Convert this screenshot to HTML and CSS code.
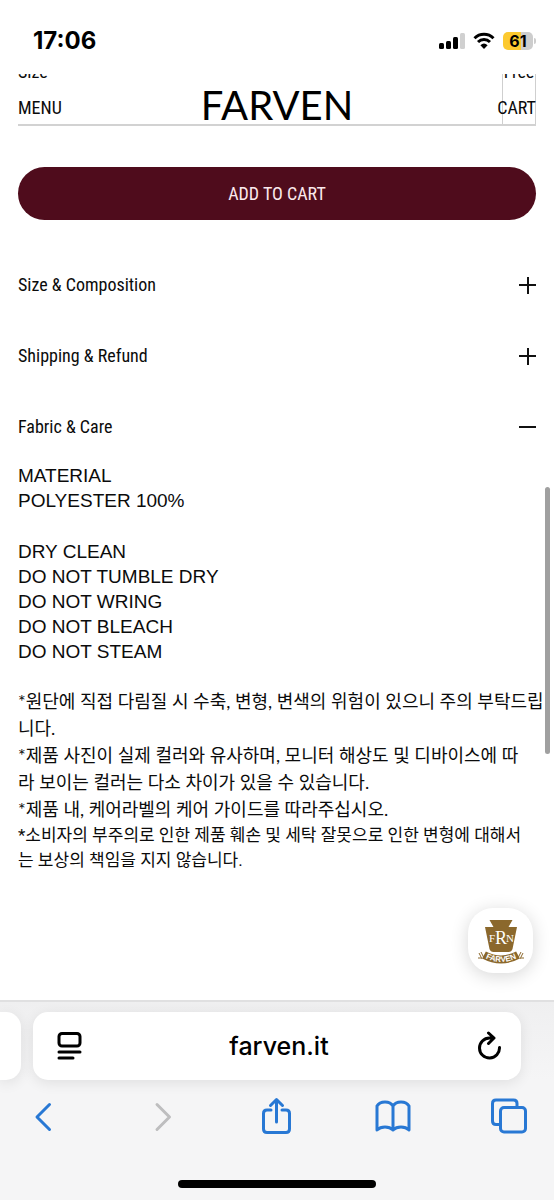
FILE: index.html
```
<!DOCTYPE html>
<html lang="ko">
<head>
<meta charset="utf-8">
<meta name="viewport" content="width=device-width, initial-scale=1">
<title>FARVEN</title>
<link rel="stylesheet" href="styles.css">
</head>
<body>
<div class="phone">
  <div class="status">
    <time class="clock">17:06</time>
    <div class="indicators">
      <svg class="signal" width="26" height="18" viewBox="0 0 26 18" aria-hidden="true">
        <rect x="0" y="11" width="5" height="6" rx="1.5"/>
        <rect x="7" y="9" width="5" height="8" rx="1.5"/>
        <rect x="14" y="5" width="5" height="12" rx="1.5"/>
        <rect class="dim" x="21" y="1" width="5" height="16" rx="1.5"/>
      </svg>
      <svg class="wifi" width="22" height="18" viewBox="0 0 22 18" aria-hidden="true">
        <path d="M1.500 6.200a13.600 13.600 0 0 1 19 0M5 10a8.700 8.700 0 0 1 12 0"/>
        <path class="dot" d="M7.400 13.200a5.400 5.400 0 0 1 7.200 0L11 17z"/>
      </svg>
      <div class="battery"><span class="level">61</span><i class="tip"></i></div>
    </div>
  </div>

  <main class="page">
    <header class="site-header">
      <button class="nav" type="button">MENU</button>
      <a class="logo" href="#">FARVEN</a>
      <button class="nav cart" type="button">CART</button>
    </header>

    <div class="option">
      <span class="option-name">Size</span>
      <button class="option-value" type="button">Free</button>
    </div>

    <button class="add" type="button">ADD TO CART</button>

    <div class="accordion">
      <button class="fold" type="button" aria-expanded="false">Size &amp; Composition
        <svg width="18" height="18" viewBox="0 0 18 18" aria-hidden="true"><path d="M1 9h17M10 1v17"/></svg>
      </button>
      <button class="fold" type="button" aria-expanded="false">Shipping &amp; Refund
        <svg width="18" height="18" viewBox="0 0 18 18" aria-hidden="true"><path d="M1 9h17M10 1v17"/></svg>
      </button>
      <button class="fold" type="button" aria-expanded="true">Fabric &amp; Care
        <svg width="18" height="18" viewBox="0 0 18 18" aria-hidden="true"><path d="M1 9h17"/></svg>
      </button>
    </div>

    <section class="care">
      <p>MATERIAL<br>POLYESTER 100%</p>
      <p>DRY CLEAN<br>DO NOT TUMBLE DRY<br>DO NOT WRING<br>DO NOT BLEACH<br>DO NOT STEAM</p>
      <div class="notes">
        <p class="note">*원단에 직접 다림질 시 수축, 변형, 변색의 위험이 있으니 주의 부탁드립<br>니다.<br>*제품 사진이 실제 컬러와 유사하며, 모니터 해상도 및 디바이스에 따<br>라 보이는 컬러는 다소 차이가 있을 수 있습니다.<br>*제품 내, 케어라벨의 케어 가이드를 따라주십시오.</p>
        <p class="note-last">*소비자의 부주의로 인한 제품 훼손 및 세탁 잘못으로 인한 변형에 대해서<br>는 보상의 책임을 지지 않습니다.</p>
      </div>
    </section>

    <div class="scroll-thumb"></div>
    <button class="chat" type="button" aria-label="FARVEN chat">
      <svg width="48" height="48" viewBox="0 0 48 48" aria-hidden="true">
        <path class="gold" d="M12.500 3h23l-4 7H40l-4.500 22q-1 3-4 3h-15q-3 0-4-3L8 10h8.500z"/>
        <text class="mono side" x="15" y="25">F</text>
        <text class="mono mid" x="24" y="27">R</text>
        <text class="mono side" x="33" y="25">N</text>
        <path class="band" d="M7 38q17 9 34 0"/>
        <path class="tails" d="M2 36l3 6M4 35l3 6M1 41h3M46 36l-3 6M44 35l-3 6M47 41h-3"/>
        <path id="ribbon" fill="none" d="M6 40q18 10 36 0"/>
        <text class="ribbon-text"><textPath href="#ribbon" startOffset="50%">FARVEN</textPath></text>
      </svg>
    </button>
  </main>

  <footer class="browser">
    <div class="tabs">
      <div class="tab-prev"></div>
      <div class="address">
        <button class="icon" type="button" aria-label="Page menu">
          <svg class="ink" width="26" height="30" viewBox="0 0 26 30"><rect x="3" y="2.500" width="21" height="12.500" rx="3"/><path d="M3 21h21M3 27h14"/></svg>
        </button>
        <a class="host" href="#">farven.it</a>
        <button class="icon" type="button" aria-label="Reload">
          <svg class="ink" width="26" height="30" viewBox="0 0 26 30"><path d="M17 7H13.500A10 10 0 1 0 23.500 16.500M12.500 2l5.500 5-5.500 5.500"/></svg>
        </button>
      </div>
    </div>
    <nav class="toolbar">
      <button class="icon" type="button" aria-label="Back"><svg width="36" height="40" viewBox="0 0 36 40"><path d="M24.500 7.500L12 20l12.500 12.500"/></svg></button>
      <button class="icon off" type="button" aria-label="Forward" disabled><svg width="36" height="40" viewBox="0 0 36 40"><path d="M15 7.500L27.500 20 15 32.500"/></svg></button>
      <button class="icon" type="button" aria-label="Share"><svg width="36" height="40" viewBox="0 0 36 40"><path d="M13 13H9q-3.500 0-3.500 3.500v15.500Q5.500 35.500 9 35.500h19q3.500 0 3.500-3.500v-15.500Q31.500 13 28 13h-4M18.500 25V3M12.500 8.500l6-6 6 6"/></svg></button>
      <button class="icon" type="button" aria-label="Bookmarks"><svg width="36" height="40" viewBox="0 0 36 40"><path d="M18 9C15 3.500 5 3.500 2 9v24c4-4 12-4 16 0 4-4 12-4 16 0V9C31 3.500 21 3.500 18 9v24"/></svg></button>
      <button class="icon" type="button" aria-label="Tabs"><svg width="36" height="40" viewBox="0 0 36 40"><path d="M9.500 27.500H5q-3.500 0-3.500-3.500V6.500Q1.500 3 5 3h17.500Q26 3 26 6.500V10"/><rect x="9.500" y="10.500" width="25" height="24.500" rx="3.500"/></svg></button>
    </nav>
    <div class="home"></div>
  </footer>
</div>
</body>
</html>
```
FILE: styles.css
```
* { box-sizing: border-box; }
body { margin: 0; background: #fff; color: #0b0b0b; font-family: "Liberation Sans", "Noto Sans CJK KR", sans-serif; }
button { margin: 0; padding: 0; border: 0; background: none; color: inherit; font: inherit; }
a { color: inherit; text-decoration: none; }
p { margin: 0; }
svg { display: block; }

.phone { display: flex; flex-direction: column; min-height: 100vh; }

.status { display: flex; align-items: center; justify-content: space-between; height: 74px; padding: 8px 18px 0 33px; }
.clock { font: bold 24px/26px Inter, sans-serif; color: #000; }
.indicators { display: flex; align-items: center; gap: 8px; }
.signal .dim { fill: #d0d0d0; }
.wifi { fill: none; stroke: #000; stroke-width: 3; }
.wifi .dot { fill: #000; stroke: none; }
.battery { position: relative; width: 30px; height: 18px; margin-right: 3px; border-radius: 5px; background: linear-gradient(90deg, #fcc92f 61%, #cdcdcd 61%); text-align: center; }
.level { display: block; font: bold 16px/18px Inter, sans-serif; color: #000; }
.tip { position: absolute; right: -3px; top: 6px; width: 2px; height: 6px; border-radius: 0 2px 2px 0; background: #cdcdcd; }

.page { position: relative; flex: 1; display: flex; flex-direction: column; padding: 0 18px; overflow: hidden; }
.site-header { position: absolute; inset: 0 18px auto; display: grid; grid-template-columns: 1fr auto 1fr; align-items: center; height: 68px; }
.nav, .option, .add, .fold { font-family: "Liberation Sans Narrow", "Roboto Condensed", Roboto, sans-serif; font-size: 18px; }
.nav { justify-self: start; line-height: 24px; }
.cart { justify-self: end; }
.logo { padding-bottom: 6px; font: 40px/44px Lato, sans-serif; color: #000; }

.option { display: flex; justify-content: space-between; height: 52px; border-bottom: 2px solid #d2d2d2; line-height: 20px; }
.option-name { margin-top: -12px; }
.option-value { width: 34px; height: 62px; margin-top: -12px; border: solid #cfcfcf; border-width: 0 1px; display: flex; justify-content: center; }

.add { height: 53px; margin-top: 41px; border-radius: 27px; background: #4f0c1c; color: #fbe9ec; }

.accordion { display: flex; flex-direction: column; margin-top: 29px; }
.fold { display: flex; align-items: center; justify-content: space-between; height: 71px; text-align: left; }
.fold svg { stroke: #111; stroke-width: 2; }

.care { display: flex; flex-direction: column; gap: 26px; margin-top: 1px; font-size: 19px; line-height: 25px; white-space: nowrap; }
.notes { margin-top: -2px; }
.note { font-family: Lato, "Noto Sans CJK KR", sans-serif; font-size: 18px; line-height: 27px; }
.note-last { font-family: Roboto, "Noto Sans CJK KR", sans-serif; font-size: 17px; line-height: 25px; }

.scroll-thumb { position: absolute; top: 413px; right: 4px; width: 5px; height: 267px; border-radius: 3px; background: #a0a0a0; }
.chat { position: absolute; right: 21px; bottom: 27px; display: grid; place-items: center; width: 65px; height: 65px; border-radius: 25px; background: #fff; box-shadow: 0 3px 18px rgba(0, 0, 0, .16); }
.gold { fill: #8b682c; }
.mono { fill: #fff; font-family: "Liberation Serif", serif; text-anchor: middle; }
.side { font-size: 11px; }
.mid { font-size: 18px; }
.band { fill: none; stroke: #8b682c; stroke-width: 8; }
.tails { fill: none; stroke: #8b682c; stroke-width: 1; }
.ribbon-text { fill: #fff; font: bold 8px "Liberation Sans", sans-serif; text-anchor: middle; }

.browser { border-top: 2px solid #e0e0e1; background: #f5f5f6; overflow: hidden; }
.tabs { display: flex; gap: 12px; padding: 10px 33px 0 0; background: linear-gradient(#efeff0, #f5f5f6); }
.tab-prev { width: 21px; height: 68px; border-radius: 0 15px 15px 0; background: #fff; box-shadow: 0 3px 14px rgba(0, 0, 0, .09); }
.address { flex: 1; display: flex; align-items: center; justify-content: space-between; height: 68px; padding: 0 19px 0 23px; border-radius: 15px; background: #fff; box-shadow: 0 3px 14px rgba(0, 0, 0, .09); }
.ink { fill: none; stroke: #000; stroke-width: 3; stroke-linecap: round; stroke-linejoin: round; }
.host { font: 500 25px/32px Inter, sans-serif; color: #000; }
.toolbar { display: flex; justify-content: space-between; padding: 17px 27px 0 25px; }
.toolbar svg { fill: none; stroke: #2878d4; stroke-width: 3; stroke-linecap: round; stroke-linejoin: round; }
.toolbar .off svg { stroke: #bebebf; }
.home { width: 198px; height: 8px; margin: 43px auto 12px; border-radius: 4px; background: #000; }
```
